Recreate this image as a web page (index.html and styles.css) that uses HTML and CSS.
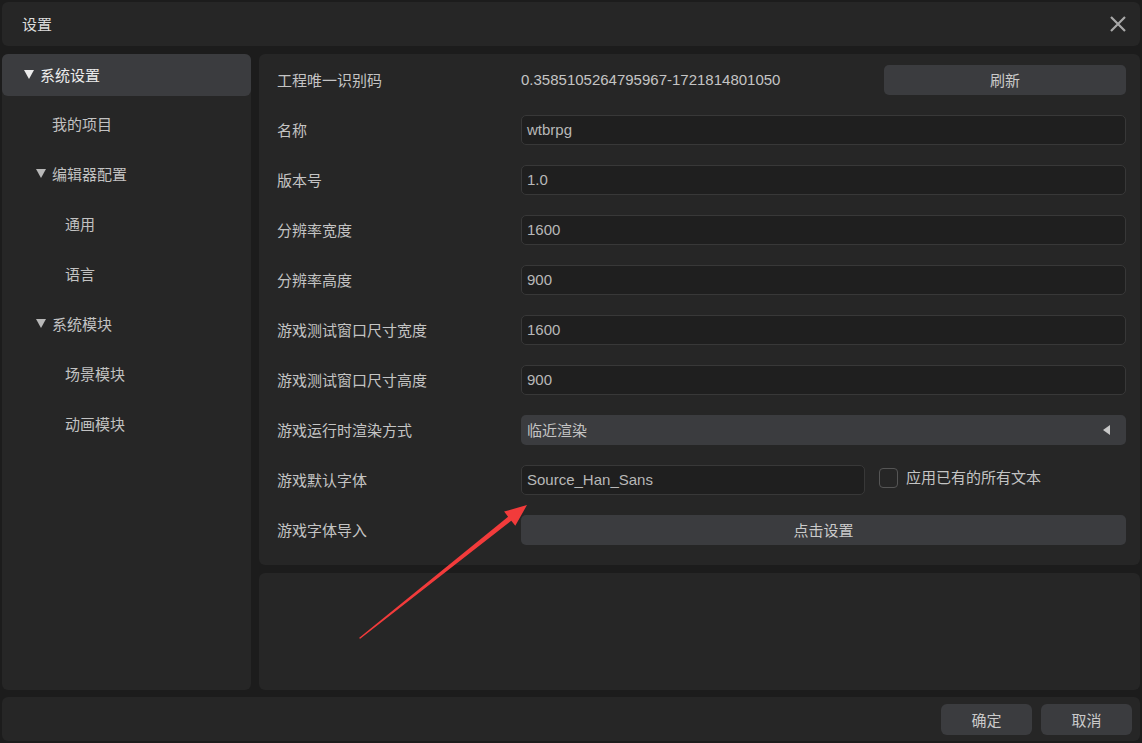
FILE: index.html
```html
<!DOCTYPE html>
<html lang="zh">
<head>
<meta charset="utf-8">
<title>设置</title>
<link rel="stylesheet" href="styles.css">
</head>
<body>
<div class="window">
  <header class="titlebar">
    <span class="title">设置</span>
    <button class="close" aria-label="关闭">
      <svg width="18" height="18" viewBox="0 0 18 18"><path d="M2 2 L16 16 M16 2 L2 16" stroke="#a8a8a8" stroke-width="2.2" fill="none"/></svg>
    </button>
  </header>
  <div class="middle">
    <nav class="sidebar">
      <div class="item selected lvl0"><span class="tri"></span>系统设置</div>
      <div class="item lvl1">我的项目</div>
      <div class="item lvl1b"><span class="tri"></span>编辑器配置</div>
      <div class="item lvl2">通用</div>
      <div class="item lvl2">语言</div>
      <div class="item lvl1b"><span class="tri"></span>系统模块</div>
      <div class="item lvl2">场景模块</div>
      <div class="item lvl2">动画模块</div>
    </nav>
    <main class="content">
      <section class="panel form">
        <div class="row">
          <label>工程唯一识别码</label>
          <div class="field split">
            <span class="value">0.3585105264795967-1721814801050</span>
            <button class="btn refresh">刷新</button>
          </div>
        </div>
        <div class="row"><label>名称</label><div class="field"><div class="input">wtbrpg</div></div></div>
        <div class="row"><label>版本号</label><div class="field"><div class="input">1.0</div></div></div>
        <div class="row"><label>分辨率宽度</label><div class="field"><div class="input">1600</div></div></div>
        <div class="row"><label>分辨率高度</label><div class="field"><div class="input">900</div></div></div>
        <div class="row"><label>游戏测试窗口尺寸宽度</label><div class="field"><div class="input">1600</div></div></div>
        <div class="row"><label>游戏测试窗口尺寸高度</label><div class="field"><div class="input">900</div></div></div>
        <div class="row"><label>游戏运行时渲染方式</label><div class="field"><div class="select"><span>临近渲染</span><span class="arrow-left"></span></div></div></div>
        <div class="row">
          <label>游戏默认字体</label>
          <div class="field font">
            <div class="input short">Source_Han_Sans</div>
            <span class="checkbox"></span>
            <span class="check-label">应用已有的所有文本</span>
          </div>
        </div>
        <div class="row"><label>游戏字体导入</label><div class="field"><button class="btn wide">点击设置</button></div></div>
      </section>
      <section class="panel lower"></section>
    </main>
  </div>
  <footer class="footer">
    <button class="btn foot">确定</button>
    <button class="btn foot">取消</button>
  </footer>
</div>
<svg class="annot" width="1142" height="743" viewBox="0 0 1142 743">
  <polygon points="359,638 508.1,516.7 504.1,511.6 527,505 515.3,525.8 511.3,520.7 360.2,638.8" fill="#f23b3b"/>
</svg>
</body>
</html>
```
FILE: styles.css
```css
* { box-sizing: border-box; }
html, body { margin: 0; padding: 0; }
body {
  width: 1142px;
  height: 743px;
  background: #1c1c1c;
  font-family: "Liberation Sans", "Noto Sans CJK SC", sans-serif;
  font-size: 15px;
  color: #c4c4c4;
  overflow: hidden;
  position: relative;
}
.window {
  padding: 2px;
  height: 743px;
  display: flex;
  flex-direction: column;
}
.titlebar {
  height: 44px;
  background: #262626;
  border-radius: 6px;
  display: flex;
  align-items: center;
  justify-content: space-between;
  padding: 0 13px 1px 20px;
  flex: none;
}
.title { color: #dcdcdc; }
.close {
  background: none;
  border: 0;
  padding: 0;
  width: 18px;
  height: 18px;
  display: flex;
}
.middle {
  margin-top: 8px;
  height: 636px;
  display: flex;
  gap: 8px;
  flex: none;
}
.sidebar {
  width: 249px;
  background: #262626;
  border-radius: 6px;
  display: flex;
  flex-direction: column;
  gap: 8px;
}
.item {
  height: 42px;
  display: flex;
  align-items: center;
  color: #c2c2c2;
  border-radius: 6px;
  padding-bottom: 2px;
}
.item + .item { margin-top: -1px; margin-bottom: 1px; }
.item.selected { background: #3b3c3f; color: #ececec; }
.lvl0 { padding-left: 22px; }
.lvl1 { padding-left: 50px; }
.lvl1b { padding-left: 34px; }
.lvl2 { padding-left: 63px; }
.tri {
  width: 0;
  height: 0;
  border-left: 5px solid transparent;
  border-right: 5px solid transparent;
  border-top: 9px solid #b8b8b8;
  margin-right: 6px;
  margin-top: 1px;
}
.selected .tri { border-top-color: #ececec; }
.content {
  flex: 1;
  display: flex;
  flex-direction: column;
  gap: 8px;
}
.panel {
  background: #262626;
  border-radius: 6px;
}
.form {
  height: 511px;
  padding: 1px 14px 10px 18px;
  display: flex;
  flex-direction: column;
}
.lower { flex: 1; }
.row {
  height: 50px;
  display: flex;
  align-items: center;
}
.row label { width: 244px; flex: none; color: #c4c4c4; margin-top: -2px; }
.field { flex: 1; display: flex; align-items: center; }
.split { justify-content: space-between; }
.value { color: #c4c4c4; margin-top: -2px; }
.input {
  flex: 1;
  height: 30px;
  background: #1f1f1f;
  border: 1px solid #383838;
  border-radius: 5px;
  display: flex;
  align-items: center;
  padding-left: 5px;
  padding-bottom: 1px;
  color: #b8b8b8;
}
.input.short { flex: none; width: 344px; }
.select {
  flex: 1;
  height: 30px;
  background: #3b3c3f;
  border-radius: 5px;
  display: flex;
  align-items: center;
  justify-content: space-between;
  padding: 0 16px 1px 6px;
  color: #c4c4c4;
}
.arrow-left {
  width: 0;
  height: 0;
  border-top: 5px solid transparent;
  border-bottom: 5px solid transparent;
  border-right: 7px solid #c8c8c8;
}
.checkbox {
  width: 19px;
  height: 20px;
  border: 1px solid #555;
  border-radius: 4px;
  margin-left: 14px;
  margin-right: 8px;
  margin-top: -4px;
}
.check-label { margin-top: -7px; color: #c4c4c4; }
.btn {
  background: #3b3c3f;
  border: 0;
  border-radius: 5px;
  color: #cacaca;
  font-family: inherit;
  font-size: 15px;
  height: 30px;
  padding: 0 0 1px;
}
.refresh { width: 242px; }
.wide { flex: 1; }
.footer {
  margin-top: 7px;
  flex: 1;
  background: #262626;
  border-radius: 6px;
  display: flex;
  justify-content: flex-end;
  align-items: flex-start;
  gap: 9px;
  padding: 7px 8px 0 0;
}
.btn.foot { width: 91px; height: 31px; border-radius: 6px; }
.annot {
  position: absolute;
  left: 0;
  top: 0;
  pointer-events: none;
}
```
